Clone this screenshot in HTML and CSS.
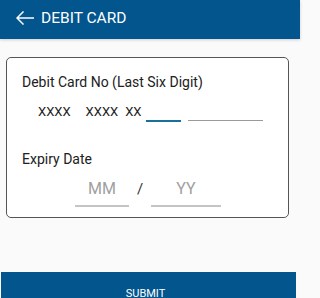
FILE: index.html
```html
<!DOCTYPE html>
<html>
<head>
<meta charset="utf-8">
<link rel="stylesheet" href="styles.css">
</head>
<body>
<div class="app">
  <header class="topbar">
    <svg class="back" width="18" height="14" viewBox="0 0 18 14">
      <path d="M18 7 H1 M7.5 0.5 L1 7 L7.5 13.5" fill="none" stroke="#fff" stroke-width="1.5"/>
    </svg>
    <span class="title">DEBIT CARD</span>
  </header>
  <main class="content">
    <section class="card">
      <div class="label">Debit Card No (Last Six Digit)</div>
      <div class="card-row">
        <span class="mask m1">XXXX</span>
        <span class="mask m2">XXXX</span>
        <span class="mask m3">XX</span>
        <span class="field field-active"></span>
        <span class="field field-rest"></span>
      </div>
      <div class="label label-exp">Expiry Date</div>
      <div class="exp-row">
        <span class="exp exp-mm">MM</span>
        <span class="slash">/</span>
        <span class="exp exp-yy">YY</span>
      </div>
    </section>
    <button class="submit">SUBMIT</button>
  </main>
</div>
</body>
</html>
```
FILE: styles.css
```css
html, body {
  margin: 0;
  padding: 0;
  height: 100%;
  overflow: hidden;
  background: #fafafa;
  font-family: Roboto, "Liberation Sans", Arial, sans-serif;
}
.app {
  width: 300px;
  height: 100vh;
  display: flex;
  flex-direction: column;
}
.topbar {
  height: 39px;
  box-sizing: border-box;
  padding: 0 0 4px 16px;
  background: #03558e;
  display: flex;
  align-items: center;
  box-shadow: 0 1px 3px rgba(0,0,0,0.18);
  flex-shrink: 0;
}
.back {
  display: block;
  margin-right: 7px;
}
.title {
  color: #fff;
  font-size: 15.5px;
  line-height: 18px;
}
.content {
  display: flex;
  flex-direction: column;
  align-items: flex-start;
}
.card {
  margin: 18px 0 0 6px;
  width: 283px;
  box-sizing: border-box;
  background: #fff;
  border: 1px solid #555;
  border-radius: 5px;
  padding: 16px 0 10px 15px;
}
.label {
  font-size: 14px;
  line-height: 16px;
  color: #212121;
}
.card-row {
  display: flex;
  align-items: flex-start;
  margin-top: 14px;
  height: 18px;
}
.mask {
  font-size: 13px;
  line-height: 16px;
  color: #212121;
}
.m1 { margin-left: 16px; }
.m2 { margin-left: 15px; }
.m3 { margin-left: 7px; }
.field {
  height: 16px;
  display: block;
}
.field-active {
  width: 35px;
  margin-left: 4px;
  border-bottom: 2px solid #1b6f9b;
}
.field-rest {
  width: 75px;
  margin-left: 7px;
  border-bottom: 1px solid #9a9a9a;
}
.label-exp {
  margin-top: 29px;
}
.exp-row {
  display: flex;
  align-items: flex-start;
  margin-top: 11px;
}
.exp {
  height: 22px;
  line-height: 22px;
  font-size: 16px;
  color: #a0a0a0;
  text-align: center;
  padding-bottom: 5px;
  border-bottom: 2px solid #c4c4c4;
}
.exp-mm {
  width: 54px;
  margin-left: 53px;
}
.slash {
  font-size: 15px;
  line-height: 22px;
  color: #333;
  margin-left: 8px;
  width: 14px;
}
.exp-yy {
  width: 70px;
}
.submit {
  margin: 54px 0 0 1px;
  width: 295px;
  height: 27px;
  box-sizing: border-box;
  padding: 16px 6px 0 0;
  border: none;
  background: #03558e;
  color: #fff;
  font-family: Roboto, "Liberation Sans", Arial, sans-serif;
  font-size: 11px;
  line-height: 11px;
  flex-shrink: 0;
  overflow: hidden;
}
```
